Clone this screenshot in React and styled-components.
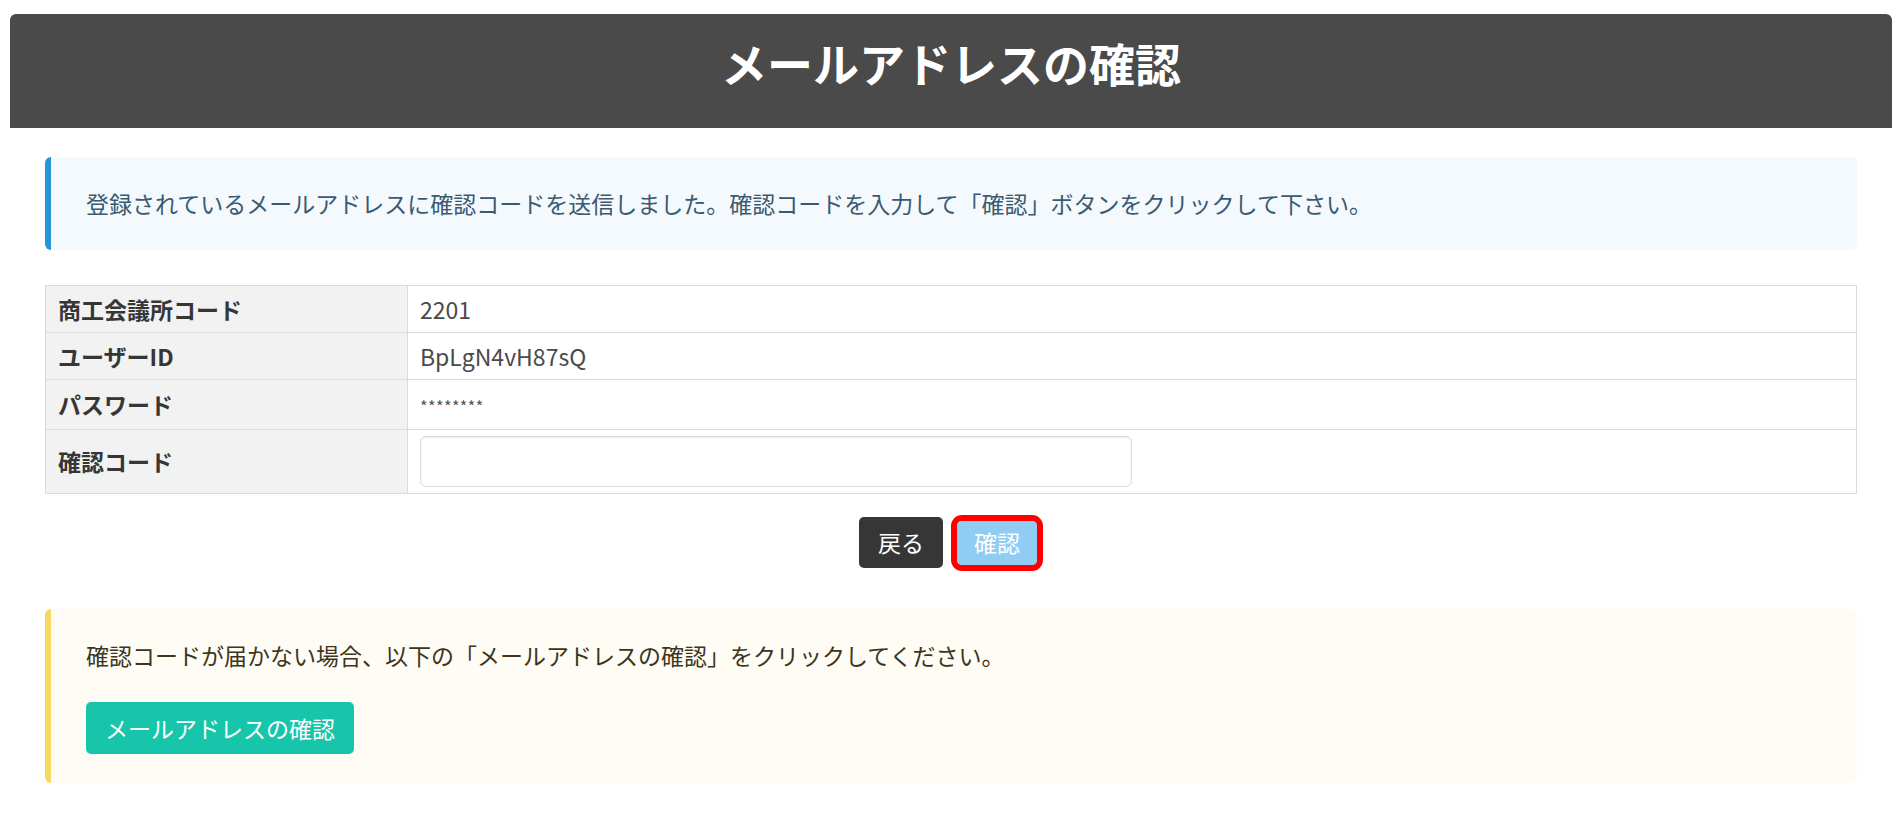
import React from 'react';
import styled, { createGlobalStyle } from 'styled-components';

const GlobalStyle = createGlobalStyle`
  html, body {
    margin: 0;
    padding: 0;
    background: #fff;
  }
  body {
    font-family: "Noto Sans CJK JP", "Noto Sans", sans-serif;
    font-size: 23px;
    color: #4a4a4a;
  }
`;

const Header = styled.header`
  margin: 14px 8px 0 10px;
  height: 114px;
  box-sizing: border-box;
  padding-top: 14px;
  background: #4a4a4a;
  border-radius: 6px 6px 0 0;
  text-align: center;
`;

const Title = styled.h1`
  margin: 0;
  font-size: 46px;
  line-height: 69px;
  font-weight: 700;
  color: #fff;
`;

const Content = styled.main`
  padding: 29px 43px 0 45px;
`;

const Message = styled.div`
  box-sizing: border-box;
  border-left: 6px solid ${(p) => p.$accent};
  border-radius: 6px;
  background: ${(p) => p.$bg};
  color: ${(p) => p.$color};
  padding: 29px 34px 29px 35px;
  line-height: 34.5px;
`;

const Table = styled.table`
  width: 100%;
  margin-top: 35px;
  border-collapse: collapse;
  table-layout: fixed;
`;

const LabelCol = styled.col`
  width: 362px;
`;

const Row = styled.tr``;

const Label = styled.th`
  text-align: left;
  background: #f2f2f2;
  color: #363636;
  font-weight: 700;
  border: 1px solid #dbdbdb;
  padding: 6px 12px;
  line-height: 34px;
`;

const Value = styled.td`
  border: 1px solid #dbdbdb;
  padding: 6px 12px;
  line-height: 34px;
  color: #4a4a4a;
`;

const Masked = styled.span`
  font-size: 16px;
  letter-spacing: 0.5px;
  color: #555;
`;

const Input = styled.input`
  display: block;
  box-sizing: border-box;
  width: 712px;
  height: 51px;
  border: 1px solid #dbdbdb;
  border-radius: 6px;
  box-shadow: inset 0 1px 2px rgba(10, 10, 10, 0.08);
  font: inherit;
  padding: 0 12px;
  outline: none;
`;

const Actions = styled.div`
  display: flex;
  justify-content: center;
  align-items: center;
  gap: 8px;
  margin: 21px 0 38px;
`;

const Button = styled.button`
  box-sizing: border-box;
  height: ${(p) => p.$h || 51}px;
  padding: 0 ${(p) => p.$px || 19}px;
  border: none;
  border-radius: 5px;
  background: ${(p) => p.$bg};
  color: #fff;
  font: inherit;
  font-size: ${(p) => p.$fs || 23}px;
  line-height: 1;
  cursor: pointer;
`;

const Highlight = styled.span`
  display: inline-flex;
  border: 6px solid #f00;
  border-radius: 11px;
`;

const Note = styled.p`
  margin: 0 0 30px;
`;

export default function App() {
  return (
    <>
      <GlobalStyle />
      <Header>
        <Title>メールアドレスの確認</Title>
      </Header>
      <Content>
        <Message $accent="#2596d8" $bg="#f4f9fd" $color="#3a5a72">
          登録されているメールアドレスに確認コードを送信しました。確認コードを入力して「確認」ボタンをクリックして下さい。
        </Message>

        <Table>
          <colgroup>
            <LabelCol />
            <col />
          </colgroup>
          <tbody>
            <Row>
              <Label>商工会議所コード</Label>
              <Value>2201</Value>
            </Row>
            <Row>
              <Label>ユーザーID</Label>
              <Value>BpLgN4vH87sQ</Value>
            </Row>
            <Row>
              <Label>パスワード</Label>
              <Value>
                <Masked>********</Masked>
              </Value>
            </Row>
            <Row>
              <Label>確認コード</Label>
              <Value>
                <Input type="text" />
              </Value>
            </Row>
          </tbody>
        </Table>

        <Actions>
          <Button $bg="#363636">戻る</Button>
          <Highlight>
            <Button $bg="#8fcdf4" $h={44} $px={17}>
              確認
            </Button>
          </Highlight>
        </Actions>

        <Message $accent="#f7d860" $bg="#fffcf5" $color="#3b3520">
          <Note>確認コードが届かない場合、以下の「メールアドレスの確認」をクリックしてください。</Note>
          <Button $bg="#17c6aa" $h={52} $px={19}>
            メールアドレスの確認
          </Button>
        </Message>
      </Content>
    </>
  );
}
